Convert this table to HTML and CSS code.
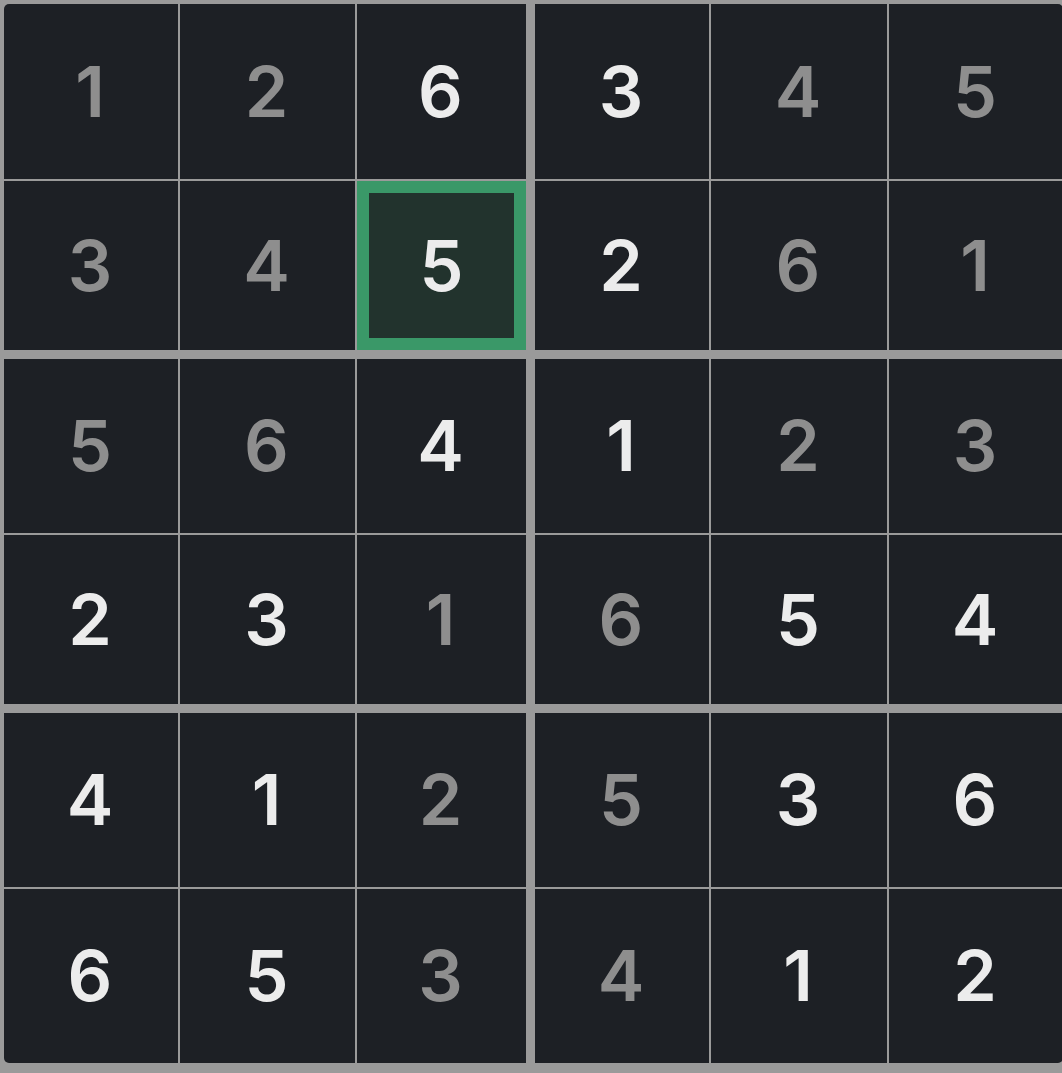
FILE: index.html
```html
<!DOCTYPE html>
<html lang="en">
<head>
<meta charset="utf-8">
<title>Sudoku</title>
<link rel="stylesheet" href="styles.css">
</head>
<body>
<div class="board">
  <div class="cell given">1</div>
  <div class="cell given">2</div>
  <div class="cell entry box-r">6</div>
  <div class="cell entry">3</div>
  <div class="cell given">4</div>
  <div class="cell given corner-tr">5</div>

  <div class="cell given box-b">3</div>
  <div class="cell given box-b">4</div>
  <div class="cell entry box-r box-b selected">5</div>
  <div class="cell entry box-b">2</div>
  <div class="cell given box-b">6</div>
  <div class="cell given box-b">1</div>

  <div class="cell given">5</div>
  <div class="cell given">6</div>
  <div class="cell entry box-r">4</div>
  <div class="cell entry">1</div>
  <div class="cell given">2</div>
  <div class="cell given">3</div>

  <div class="cell entry box-b">2</div>
  <div class="cell entry box-b">3</div>
  <div class="cell given box-r box-b">1</div>
  <div class="cell given box-b">6</div>
  <div class="cell entry box-b">5</div>
  <div class="cell entry box-b">4</div>

  <div class="cell entry">4</div>
  <div class="cell entry">1</div>
  <div class="cell given box-r">2</div>
  <div class="cell given">5</div>
  <div class="cell entry">3</div>
  <div class="cell entry">6</div>

  <div class="cell entry corner-bl">6</div>
  <div class="cell entry">5</div>
  <div class="cell given box-r">3</div>
  <div class="cell given">4</div>
  <div class="cell entry">1</div>
  <div class="cell entry corner-br">2</div>
</div>
</body>
</html>
```

FILE: styles.css
```css
html, body {
  margin: 0;
  padding: 0;
  background: #9a9a9a;
  overflow: hidden;
}

.board {
  width: 1067px;
  box-sizing: border-box;
  padding: 4px;
  display: grid;
  grid-template-columns: 174px 175px 176px 174px 176px 174px;
  grid-template-rows: 175px 176px 174px 176px 174px 174px;
  gap: 2px;
  background: #9a9a9a;
  font-family: Inter, "Noto Sans", sans-serif;
}

.cell {
  display: flex;
  align-items: center;
  justify-content: center;
  background: #1d2025;
  font-size: 70px;
  font-weight: 600;
  line-height: 1;
  box-sizing: border-box;
  padding-right: 2px;
}

.cell:first-child {
  border-top-left-radius: 5px;
}

.corner-tr { border-top-right-radius: 5px; }
.corner-bl { border-bottom-left-radius: 5px; }
.corner-br { border-bottom-right-radius: 5px; }

.given {
  color: #8e8e8e;
}

.entry {
  color: #ececec;
}

.box-r {
  margin-right: 7px;
}

.box-b {
  margin-bottom: 7px;
}

.selected {
  background: #22332d;
  border: 12px solid #3a9868;
  padding-right: 0;
}
```
